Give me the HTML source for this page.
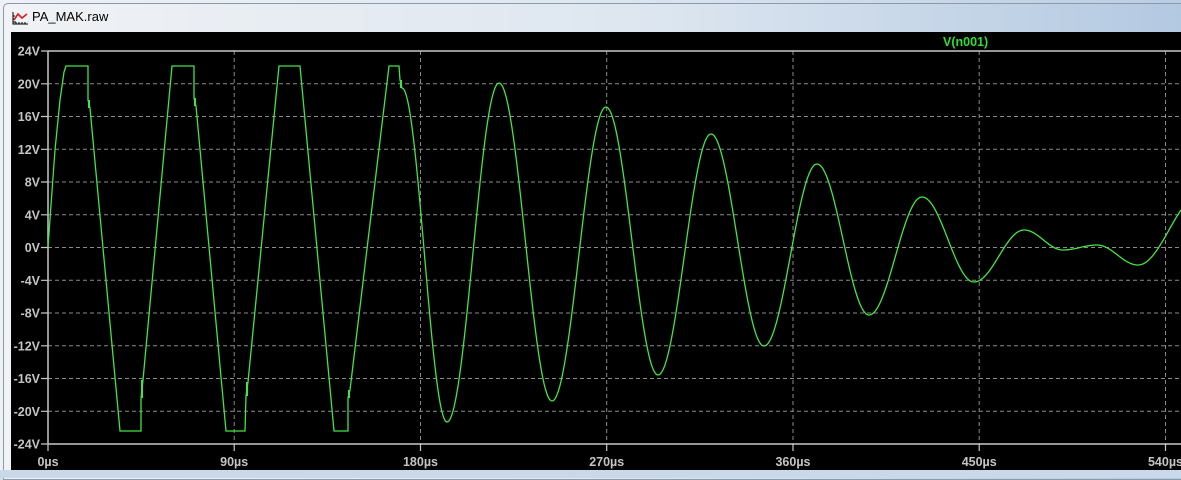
<!DOCTYPE html>
<html><head><meta charset="utf-8"><style>
html,body{margin:0;padding:0;width:1181px;height:478px;overflow:hidden;background:#cfdcea;}
#win{position:absolute;left:0;top:0;width:1181px;height:478px;background:linear-gradient(90deg,#eef1f5 0%,#dfe7f0 50%,#b9cde3 100%);}
#frame{position:absolute;left:3px;top:3px;width:1178px;height:475px;border:1px solid #8a9aab;border-radius:5px 0 0 0;background:linear-gradient(90deg,#f0f2f5 0%,#dde6f0 55%,#b3c9e1 100%);}
#title{position:absolute;left:32px;top:9px;font:13px "Liberation Sans",sans-serif;color:#000;}
#bottom{position:absolute;left:0;top:470px;width:1181px;height:8px;background:#c9d9ea;}
svg{position:absolute;left:0;top:0;}
</style></head><body>
<div id="win"><div id="frame"></div></div>
<div id="bottom"></div>
<div id="title">PA_MAK.raw</div>
<svg width="1181" height="478" xmlns="http://www.w3.org/2000/svg">
 <g>
  <path d="M13,12 V24 H28" stroke="#000" stroke-width="1" fill="none"/>
  <path d="M13,22 L16,22 M13,19 L15,19 M13,16 L15,16 M16,24 V22 M19,24 V22 M22,24 V22 M25,24 V22" stroke="#000" stroke-width="1"/>
  <path d="M14,20 L18,14 L22,18 L27,14" stroke="#d02020" stroke-width="1.6" fill="none"/>
 </g>
 <rect x="11" y="32" width="1170" height="438" fill="#000"/>
 <g id="grid" stroke="#8a8a8a" stroke-width="1" stroke-dasharray="4,3" fill="none"></g>
 <g stroke="#c8c8c8" stroke-width="1.5" fill="none">
  <path d="M48,51 H1181 M48,51 V444 M48,444 H1181"/>
 </g>
 <g id="ticks" stroke="#c8c8c8" stroke-width="1.2"></g>
 <g id="labels" font-family="Liberation Sans, sans-serif" font-size="12.5" font-weight="bold" fill="#c4c4c4"></g>
 <text x="943" y="46" font-family="Liberation Sans, sans-serif" font-size="12.5" font-weight="bold" fill="#33dd33">V(n001)</text>
 <path id="wave" stroke="#44e444" stroke-width="1.3" fill="none"/>
 <path d="M89,100 V108 M195,98 V106 M142,380 V398 M247,382 V396 M349,390 V398 M401,80 V88" stroke="#44e444" stroke-width="2"/>
</svg>
<script>
var ns="http://www.w3.org/2000/svg";
function el(p,t,a,txt){var e=document.createElementNS(ns,t);for(var k in a)e.setAttribute(k,a[k]);if(txt)e.textContent=txt;p.appendChild(e);return e;}
var g=document.getElementById('grid'),tk=document.getElementById('ticks'),lb=document.getElementById('labels');
var d="";
for(var i=1;i<12;i++){var y=51+i*393/12;d+="M48,"+y.toFixed(1)+"H1181";}
var xs=[234.2,420.5,606.7,793,979.2,1165.5];
xs.forEach(function(x){d+="M"+x+",51V444";});
el(g,'path',{d:d});
var td="";
for(var i=0;i<=12;i++){var y=51+i*393/12;var v=24-4*i;td+="M41,"+y.toFixed(1)+"H48";
 el(lb,'text',{x:40,y:(y+4.5).toFixed(1),'text-anchor':'end'},v+"V");}
var xl=[48].concat(xs);
xl.forEach(function(x,j){td+="M"+x+",444V451";el(lb,'text',{x:x,y:466,'text-anchor':'middle'},(j*90)+"\u00b5s");});
el(tk,'path',{d:td});
var p="M48,247 L51,205 L55,150 L60,100 L64,72 L66,66 L88,66 L88,100 L90,108 L120,431 L141,431 L141,398 L143,380 L172,66 L194,66 L194,98 L196,106 L226,431 L245,431 L246,396 L248,382 L279,66 L300,66 L334,431 L348,431 L348,398 L350,390 L389,66 L399,66 L400,80 L402,88";
var ext=[[402,88],[447,422],[499,83],[552,401],[606,107],[658,375],[711,134],[764,346],[817,164],[869,315],[922,197],[974,282],[1024,230],[1063,250],[1097,245],[1138,265],[1200,195]];
for(var k=0;k<ext.length-1;k++){var a=ext[k],b=ext[k+1];
 for(var x=a[0]+1;x<=b[0];x++){var t=(x-a[0])/(b[0]-a[0]);
  var y=a[1]+(b[1]-a[1])*(1-Math.cos(Math.PI*t))/2;if(x>1181)break;p+=" L"+x+","+y.toFixed(1);}}
document.getElementById('wave').setAttribute('d',p);
</script>
</body></html>
